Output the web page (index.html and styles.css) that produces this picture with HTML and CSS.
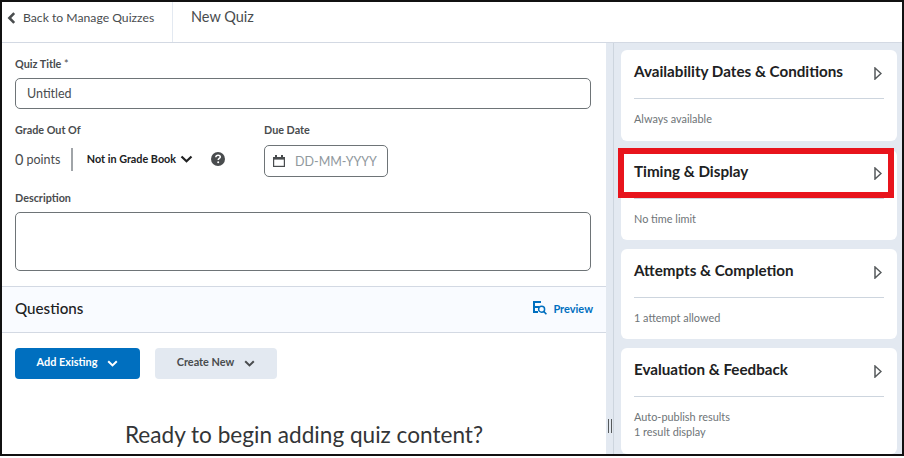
FILE: index.html
```html
<!DOCTYPE html>
<html>
<head>
<meta charset="UTF-8">
<title>New Quiz</title>
<link rel="stylesheet" href="styles.css">
</head>
<body>
<div class="frame">
	<div class="topbar">
		<a class="back">
			<svg class="back_icon" width="9" height="12" viewBox="0 0 9 12"><path d="M7.200 1.200 2.400 6 7.200 10.800" fill="none" stroke="#494c4e" stroke-width="2.600"/></svg>
			Back to Manage Quizzes
		</a>
		<div class="page_title">New Quiz</div>
	</div>
	<div class="main">
		<div class="left">
			<div class="form">
				<div class="label title_label">Quiz Title <span class="star">*</span></div>
				<div class="input title_input">Untitled</div>
				<div class="grade_row">
					<div class="grade_col">
						<div class="label">Grade Out Of</div>
						<div class="grade_line">
							<span class="zero">0</span> <span class="points">points</span>
							<span class="sep"></span>
							<span class="grade_select">Not in Grade Book</span>
							<svg class="grade_chev" width="13" height="8" viewBox="0 0 13 8"><path d="M1.500 1.500 6.500 6.300 11.500 1.500" fill="none" stroke="#202122" stroke-width="2.200"/></svg>
							<svg class="help" width="14" height="14" viewBox="0 0 14 14"><circle cx="7" cy="7" r="7" fill="#494c4e"/><path d="M4.800 5.300C4.900 3.900 5.900 3.200 7.100 3.200 8.400 3.200 9.300 4 9.300 5 9.300 6.400 7.200 6.500 7.200 8.100" fill="none" stroke="#fff" stroke-width="1.500"/><circle cx="7.200" cy="10.300" r="1" fill="#fff"/></svg>
						</div>
					</div>
					<div class="due_col">
						<div class="label">Due Date</div>
						<div class="input due_input">
							<svg width="12" height="12" viewBox="0 0 12 12"><path d="M0 2h12v10H0z" fill="#494c4e"/><path d="M2 0h2v3H2zM8 0h2v3H8z" fill="#494c4e"/><path d="M1.200 4.600h9.600v6.200H1.200z" fill="#fff"/></svg>
							<span>DD-MM-YYYY</span>
						</div>
					</div>
				</div>
				<div class="label desc_label">Description</div>
				<div class="input desc_input"></div>
			</div>
			<div class="questions_bar">
				<div class="questions_title">Questions</div>
				<a class="preview">
					<svg width="14" height="14" viewBox="0 0 14 14"><path d="M0 0h8v2H2v3h4v2H2v3h3v2H0z" fill="#006fbf"/><circle cx="8.600" cy="8.200" r="3" fill="none" stroke="#006fbf" stroke-width="1.500"/><path d="M10.700 10.400 13.400 13.200" stroke="#006fbf" stroke-width="1.600"/></svg>
					Preview
				</a>
			</div>
			<div class="buttons">
				<div class="btn btn_primary"><span class="btn_text">Add Existing</span>
					<svg width="11" height="7" viewBox="0 0 11 7"><path d="M1.200 1.200 5.500 5.400 9.800 1.200" fill="none" stroke="#fff" stroke-width="2"/></svg>
				</div>
				<div class="btn btn_second"><span class="btn_text">Create New</span>
					<svg width="11" height="7" viewBox="0 0 11 7"><path d="M1.200 1.200 5.500 5.400 9.800 1.200" fill="none" stroke="#494c4e" stroke-width="2"/></svg>
				</div>
			</div>
			<div class="ready">Ready to begin adding quiz content?</div>
		</div>
		<div class="side">
			<div class="handle"></div>
			<div class="cards">
				<div class="card">
					<div class="card_head">
						<span>Availability Dates &amp; Conditions</span>
						<svg class="arrow" width="8" height="13" viewBox="0 0 8 13"><path d="M1 1 7 6.500 1 12z" fill="#fff" stroke="#565a5c" stroke-width="1.500"/></svg>
					</div>
					<div class="card_body">Always available</div>
				</div>
				<div class="card card2">
					<div class="card_head">
						<span>Timing &amp; Display</span>
						<svg class="arrow" width="8" height="13" viewBox="0 0 8 13"><path d="M1 1 7 6.500 1 12z" fill="#fff" stroke="#565a5c" stroke-width="1.500"/></svg>
					</div>
					<div class="card_body">No time limit</div>
					<div class="red_box"></div>
				</div>
				<div class="card card3">
					<div class="card_head">
						<span>Attempts &amp; Completion</span>
						<svg class="arrow" width="8" height="13" viewBox="0 0 8 13"><path d="M1 1 7 6.500 1 12z" fill="#fff" stroke="#565a5c" stroke-width="1.500"/></svg>
					</div>
					<div class="card_body">1 attempt allowed</div>
				</div>
				<div class="card card4">
					<div class="card_head">
						<span>Evaluation &amp; Feedback</span>
						<svg class="arrow" width="8" height="13" viewBox="0 0 8 13"><path d="M1 1 7 6.500 1 12z" fill="#fff" stroke="#565a5c" stroke-width="1.500"/></svg>
					</div>
					<div class="card_body">Auto-publish results<br>1 result display</div>
				</div>
			</div>
		</div>
	</div>
</div>
</body>
</html>
```

FILE: styles.css
```css
html,body{
	margin:0;
	padding:0;
}
body{
	width:904px;
	height:458px;
	overflow:hidden;
	background:#fff;
	font-family:Lato,"Open Sans",sans-serif;
	color:#202122;
}
.frame{
	box-sizing:border-box;
	width:904px;
	height:456px;
	border:2px solid #111;
	overflow:hidden;
	display:flex;
	flex-direction:column;
}
.topbar{
	height:40px;
	flex:none;
	display:flex;
	border-bottom:1px solid #d3d9e3;
}
.back{
	width:171px;
	border-right:1px solid #e3e9f1;
	display:flex;
	align-items:center;
	font-size:12.200px;
	color:#494c4e;
	padding:0 0 9px 5px;
	box-sizing:border-box;
	gap:7px;
}
.page_title{
	font-size:14.500px;
	color:#494c4e;
	padding:0 0 0 18px;
	line-height:30px;
}
.main{
	flex:1;
	display:flex;
	min-height:0;
}
.left{
	width:604px;
	flex:none;
	overflow:hidden;
}
.form{
	padding:14px 15px 0 13px;
	height:229px;
}
.label{
	font-size:10.800px;
	font-weight:700;
	color:#494c4e;
	line-height:14px;
}
.star{
	font-weight:400;
}
.input{
	box-sizing:border-box;
	border:1px solid #6e7477;
	border-radius:5px;
	background:#fff;
}
.title_input{
	margin-top:7px;
	height:31px;
	line-height:29px;
	padding-left:11px;
	font-size:12.500px;
	color:#494c4e;
}
.grade_row{
	display:flex;
	margin-top:14px;
}
.grade_col{
	width:249px;
}
.grade_line{
	display:flex;
	align-items:center;
	margin-top:10px;
	height:24px;
}
.zero{
	font-size:14.500px;
	color:#494c4e;
}
.points{
	font-size:12.500px;
	color:#494c4e;
	margin-left:3px;
}
.sep{
	width:1.500px;
	height:23px;
	background:#a0a4a8;
	margin:0 14px 0 11px;
}
.grade_select{
	font-size:10.800px;
	font-weight:700;
	color:#202122;
	white-space:nowrap;
	margin-bottom:2px;
}
.grade_chev{
	margin-left:4px;
}
.help{
	margin-left:18px;
}
.due_input{
	margin-top:8px;
	width:124px;
	height:32px;
	display:flex;
	align-items:center;
	padding-left:8px;
	gap:10px;
	font-size:12.500px;
	color:#90989d;
}
.desc_label{
	margin-top:14px;
}
.desc_input{
	margin-top:7px;
	height:59px;
}
.questions_bar{
	background:#f9fbff;
	border-top:1px solid #d3d9e3;
	border-bottom:1px solid #d3d9e3;
	display:flex;
	align-items:center;
	justify-content:space-between;
	padding:0 13px 4px 13px;
	height:41px;
}
.questions_title{
	font-size:15.200px;
	color:#202122;
	font-weight:500;
}
.preview{
	display:flex;
	align-items:center;
	gap:6px;
	font-size:11px;
	font-weight:700;
	color:#006fbf;
	padding-top:1px;
}
.buttons{
	display:flex;
	gap:15px;
	padding:15px 13px 0 13px;
}
.btn{
	height:31px;
	box-sizing:border-box;
	border-radius:4px;
	display:flex;
	align-items:center;
	justify-content:center;
	gap:10px;
	font-size:10.900px;
	font-weight:700;
}
.btn_text{
	margin-bottom:4px;
}
.btn_primary{
	width:125px;
	background:#006fbf;
	color:#fff;
}
.btn_second{
	width:122px;
	background:#e3e9f1;
	color:#494c4e;
}
.ready{
	text-align:center;
	width:604px;
	font-size:22.600px;
	color:#333537;
	margin-top:43px;
	line-height:26px;
}
.side{
	flex:1;
	background:#e3e9f1;
	display:flex;
	min-width:0;
}
.handle{
	width:7px;
	flex:none;
	border-right:1px solid #cdd5de;
	position:relative;
}
.handle::after{
	content:"";
	position:absolute;
	left:2px;
	top:376px;
	width:4px;
	height:14px;
	border-left:1px solid #565a5c;
	border-right:1px solid #565a5c;
	box-sizing:border-box;
}
.cards{
	flex:1;
	padding:7px 5px 0 7px;
	display:flex;
	flex-direction:column;
	gap:9px;
}
.card{
	position:relative;
	background:#fff;
	border-radius:6px;
	height:91px;
	padding:0 13px;
	flex:none;
	box-sizing:border-box;
}
.card2{
	height:90px;
}
.card3{
	height:90px;
}
.card4{
	height:106px;
}
.card_head{
	height:49px;
	display:flex;
	justify-content:space-between;
	align-items:center;
	font-size:15.200px;
	font-weight:700;
	color:#202122;
	border-bottom:1px solid #cdd5de;
	padding-bottom:6px;
	box-sizing:border-box;
}
.arrow{
	margin-right:2px;
	margin-top:5px;
}
.card_body{
	margin-top:12px;
	font-size:10.900px;
	line-height:15px;
	color:#6e7477;
}
.red_box{
	position:absolute;
	left:-3px;
	top:-2px;
	width:276px;
	height:50px;
	box-sizing:border-box;
	border:6px solid #e8141c;
}
```
